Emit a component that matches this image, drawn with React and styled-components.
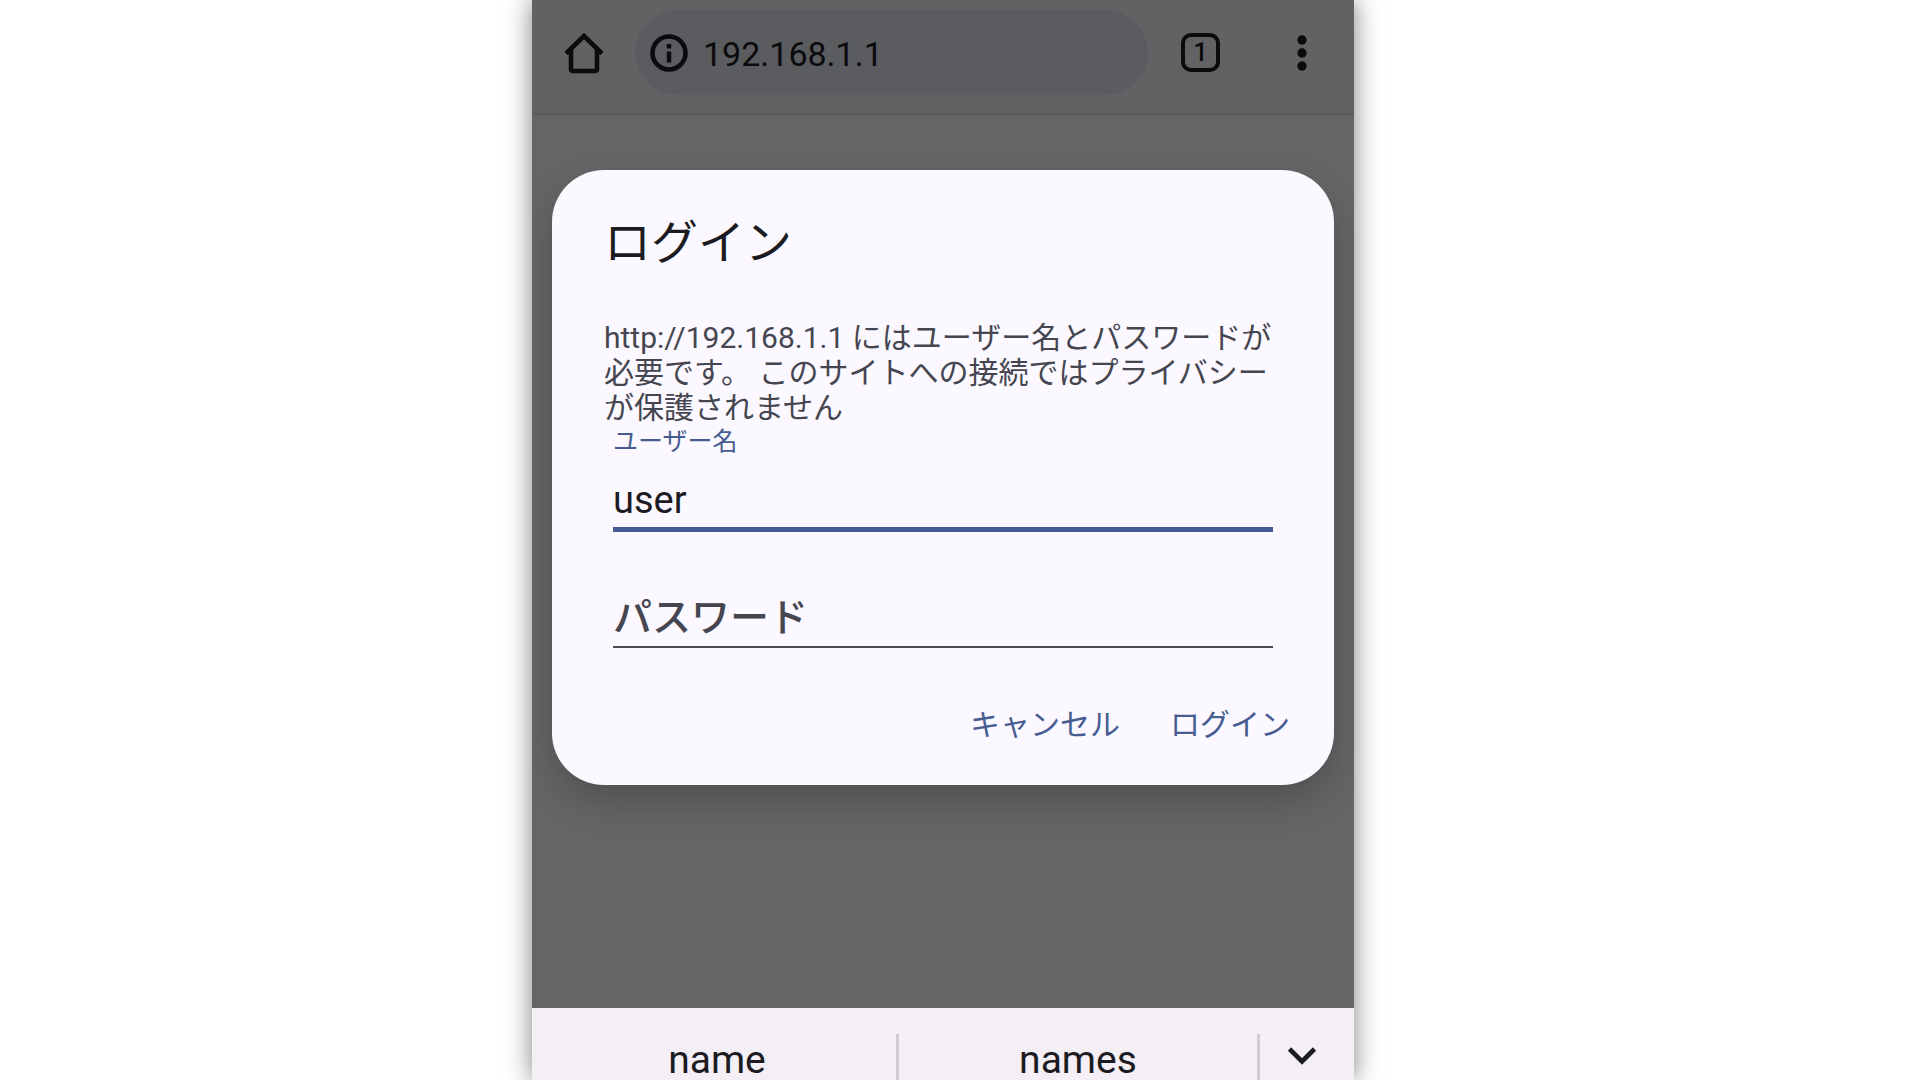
import React, { useState } from 'react';
import styled, { createGlobalStyle } from 'styled-components';

const GlobalStyle = createGlobalStyle`
  * {
    box-sizing: border-box;
  }
  body {
    background-color: #ffffff;
    font-family: Roboto, 'Noto Sans CJK JP', sans-serif;
    margin: 0;
  }
  button, input {
    background: none;
    border: none;
    color: inherit;
    font-family: inherit;
    margin: 0;
    outline: none;
    padding: 0;
  }
  button {
    cursor: pointer;
  }
  svg {
    display: block;
  }
`;
const Screen = styled.div`
  display: flex;
  height: 100vh;
  justify-content: center;
  overflow: hidden;
  padding-right: 34px;
`;
const Phone = styled.div`
  box-shadow: 0 0 24px rgba(0, 0, 0, 0.5);
  display: flex;
  flex-direction: column;
  max-width: 822px;
  width: 100%;
`;
const Toolbar = styled.header`
  align-items: center;
  background-color: #626264;
  border-bottom: 2px solid #5a5a62;
  color: #0b0b0d;
  display: flex;
  padding: 10px 30px 18px 32px;
`;
const AddressBar = styled.div`
  align-items: center;
  background-color: #5b5c60;
  border-radius: 43px;
  display: flex;
  flex: 1;
  gap: 15px;
  height: 85px;
  margin: 0 33px 0 31px;
  min-width: 0;
  padding: 0 15px;
`;
const AddressInput = styled.input`
  flex: 1;
  font-size: 34px;
  line-height: 40px;
  min-width: 0;
  padding-top: 2px;
`;
const TabCount = styled.button`
  border: 4px solid #0b0b0d;
  border-radius: 10px;
  font-size: 25px;
  font-weight: 500;
  height: 39px;
  line-height: 32px;
  width: 39px;
`;
const MenuButton = styled.button`
  margin-left: 60px;
`;
const Page = styled.main`
  background-color: #656565;
  flex: 1;
  overflow: hidden;
  padding: 55px 20px 0;
`;
const Dialog = styled.form`
  background-color: #fbf8ff;
  border-radius: 52px;
  box-shadow: 0 16px 36px rgba(0, 0, 0, 0.2);
  padding: 38px 44px 36px 52px;
`;
const Title = styled.h1`
  color: #1b1b21;
  font-size: 47px;
  font-weight: 400;
  line-height: 70px;
  margin: 0 0 42px;
`;
const Message = styled.p`
  color: #45464f;
  font-size: 30px;
  line-height: 35px;
  margin: 0 0 1px;
`;
const Field = styled.div`
  color: #475d92;
  display: flex;
  flex-direction: column;
  margin: 0 17px 0 9px;
`;
const FieldLabel = styled.label`
  font-size: 25px;
  line-height: 32px;
`;
const FieldInput = styled.input`
  border-bottom: ${props => props.$active ? '5px solid #475d92' : '2px solid #4e4d55'};
  color: #1b1b21;
  font-size: 38px;
  height: ${props => props.$active ? '74px' : '116px'};
  padding-top: ${props => props.$active ? '15px' : '58px'};
  width: 100%;
  &::placeholder {
    color: #45464f;
    font-size: 39px;
    font-weight: 500;
    opacity: 1;
  }
`;
const Actions = styled.div`
  color: #475d92;
  display: flex;
  gap: 50px;
  justify-content: flex-end;
  margin-top: 53px;
`;
const ActionButton = styled.button`
  font-size: 30px;
  line-height: 48px;
`;
const Suggestions = styled.footer`
  background-color: #f3eff5;
  color: #1b1b21;
  display: flex;
  padding: 26px 0 0 6px;
`;
const Suggestion = styled.button`
  border-right: 3px solid #cfccd3;
  flex: 1;
  font-size: 39px;
  height: 46px;
  line-height: 40px;
  padding-top: 6px;
`;
const CollapseButton = styled.button`
  align-items: center;
  display: flex;
  height: 46px;
  padding: 0 37px 2px 27px;
`;

const HomeIcon = () => (
  <svg width="40" height="42" viewBox="0 0 40 42" fill="none" stroke="currentColor" strokeWidth="4.600">
    <path d="M2 21.500 20 4 38 21.500" />
    <path d="M7 17V37Q7 39 9 39H31Q33 39 33 37V17" />
  </svg>
);

const InfoIcon = () => (
  <svg width="38" height="38" viewBox="0 0 38 38" fill="currentColor">
    <circle cx="19" cy="19" r="16.500" fill="none" stroke="currentColor" strokeWidth="4.600" />
    <path d="M16.800 10h4.400v4.400h-4.400zM16.800 17.500h4.400v11h-4.400z" />
  </svg>
);

const MenuIcon = () => (
  <svg width="44" height="44" viewBox="0 0 44 44" fill="currentColor">
    <circle cx="22" cy="9" r="4.700" />
    <circle cx="22" cy="22" r="4.700" />
    <circle cx="22" cy="35" r="4.700" />
  </svg>
);

const ChevronIcon = () => (
  <svg width="30" height="20" viewBox="0 0 30 20" fill="none" stroke="currentColor" strokeWidth="4.600">
    <path d="M2.500 3 15 15.500 27.500 3" />
  </svg>
);

const App = () => {
  const [username, setUsername] = useState('user');
  const [password, setPassword] = useState('');

  return (
    <>
      <GlobalStyle />
      <Screen>
        <Phone>
          <Toolbar>
            <button type="button" aria-label="ホーム"><HomeIcon /></button>
            <AddressBar>
              <InfoIcon />
              <AddressInput aria-label="URL" defaultValue="192.168.1.1" />
            </AddressBar>
            <TabCount type="button">1</TabCount>
            <MenuButton type="button" aria-label="メニュー"><MenuIcon /></MenuButton>
          </Toolbar>
          <Page>
            <Dialog onSubmit={ e => e.preventDefault() }>
              <Title>ログイン</Title>
              <Message>
                http://192.168.1.1 にはユーザー名とパスワードが必要です。 このサイトへの接続ではプライバシーが保護されません
              </Message>
              <Field>
                <FieldLabel htmlFor="username">ユーザー名</FieldLabel>
                <FieldInput
                  id="username"
                  $active
                  value={ username }
                  onChange={ e => setUsername(e.target.value) }
                />
                <FieldInput
                  type="password"
                  aria-label="パスワード"
                  placeholder="パスワード"
                  value={ password }
                  onChange={ e => setPassword(e.target.value) }
                />
              </Field>
              <Actions>
                <ActionButton type="button">キャンセル</ActionButton>
                <ActionButton type="submit">ログイン</ActionButton>
              </Actions>
            </Dialog>
          </Page>
          <Suggestions>
            <Suggestion type="button">name</Suggestion>
            <Suggestion type="button">names</Suggestion>
            <CollapseButton type="button" aria-label="閉じる"><ChevronIcon /></CollapseButton>
          </Suggestions>
        </Phone>
      </Screen>
    </>
  )
}

export default App;
